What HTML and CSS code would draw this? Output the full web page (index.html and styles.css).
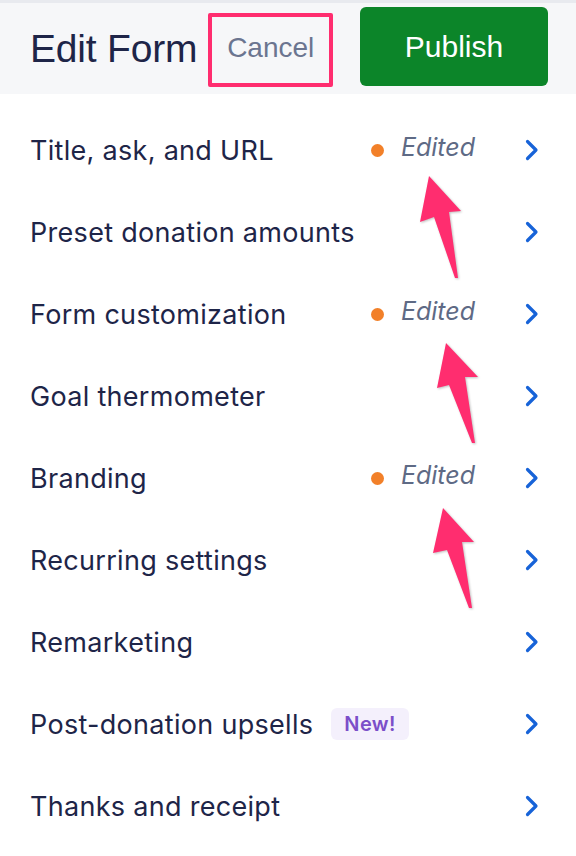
FILE: index.html
```html
<!DOCTYPE html>
<html>
<head>
<meta charset="utf-8">
<link rel="stylesheet" href="styles.css">
</head>
<body>
<div class="page">
  <header class="header">
    <h1 class="title">Edit Form</h1>
    <button class="cancel">Cancel</button>
    <button class="publish">Publish</button>
  </header>
  <ul class="list">
    <li class="row"><span class="label">Title, ask, and URL</span><span class="spacer"></span><span class="status"><span class="dot"></span><span class="edited">Edited</span></span><svg class="chev" viewBox="0 0 14 22"><path d="M2.5 2.5 L11 11 L2.5 19.5"/></svg></li>
    <li class="row"><span class="label">Preset donation amounts</span><span class="spacer"></span><svg class="chev" viewBox="0 0 14 22"><path d="M2.5 2.5 L11 11 L2.5 19.5"/></svg></li>
    <li class="row"><span class="label">Form customization</span><span class="spacer"></span><span class="status"><span class="dot"></span><span class="edited">Edited</span></span><svg class="chev" viewBox="0 0 14 22"><path d="M2.5 2.5 L11 11 L2.5 19.5"/></svg></li>
    <li class="row"><span class="label">Goal thermometer</span><span class="spacer"></span><svg class="chev" viewBox="0 0 14 22"><path d="M2.5 2.5 L11 11 L2.5 19.5"/></svg></li>
    <li class="row"><span class="label">Branding</span><span class="spacer"></span><span class="status"><span class="dot"></span><span class="edited">Edited</span></span><svg class="chev" viewBox="0 0 14 22"><path d="M2.5 2.5 L11 11 L2.5 19.5"/></svg></li>
    <li class="row"><span class="label">Recurring settings</span><span class="spacer"></span><svg class="chev" viewBox="0 0 14 22"><path d="M2.5 2.5 L11 11 L2.5 19.5"/></svg></li>
    <li class="row"><span class="label">Remarketing</span><span class="spacer"></span><svg class="chev" viewBox="0 0 14 22"><path d="M2.5 2.5 L11 11 L2.5 19.5"/></svg></li>
    <li class="row"><span class="label">Post-donation upsells</span><span class="badge">New!</span><span class="spacer"></span><svg class="chev" viewBox="0 0 14 22"><path d="M2.5 2.5 L11 11 L2.5 19.5"/></svg></li>
    <li class="row"><span class="label">Thanks and receipt</span><span class="spacer"></span><svg class="chev" viewBox="0 0 14 22"><path d="M2.5 2.5 L11 11 L2.5 19.5"/></svg></li>
  </ul>
  <svg class="arrows" viewBox="0 0 576 856" width="576" height="856">
    <polygon points="429,176 461,211 449,212 458,278 455,278 434,217 420,222"/>
    <polygon points="446,343 478,377 465,377 475,443 472,443 449,385 437,388"/>
    <polygon points="443,508 474,542 462,542 472,608 469,608 447,550 433,553"/>
  </svg>
</div>
</body>
</html>
```

FILE: styles.css
```css
* { box-sizing: border-box; }
html, body { margin: 0; padding: 0; background: #ffffff; }
.page {
  position: relative;
  width: 576px;
  height: 856px;
  overflow: hidden;
  font-family: "Inter", "Liberation Sans", sans-serif;
}
.header {
  display: flex;
  align-items: center;
  height: 94px;
  padding: 0 28px 0 30px;
  background: #f6f7f9;
  border-top: 3px solid #e8eaef;
}
.title {
  margin: 0;
  font-family: "Liberation Sans", Arial, sans-serif;
  font-weight: 400;
  font-size: 39px;
  color: #1e2548;
  letter-spacing: -0.2px;
}
.cancel {
  margin-left: 11px;
  width: 125px;
  height: 74px;
  margin-top: 2px;
  border: 4px solid #ff2d6f;
  border-radius: 2px;
  background: transparent;
  font-family: "Liberation Sans", Arial, sans-serif;
  font-size: 28px;
  color: #6b7590;
  padding: 0 0 4px 0;
}
.publish {
  margin-left: auto;
  width: 188px;
  height: 79px;
  margin-top: -4px;
  border: none;
  border-radius: 6px;
  background: #0c8529;
  color: #ffffff;
  font-family: "Liberation Sans", Arial, sans-serif;
  font-size: 30px;
  padding: 0;
}
.list {
  list-style: none;
  margin: 0;
  padding: 15px 0 0 0;
}
.row {
  display: flex;
  align-items: center;
  height: 82px;
  padding: 0 37px 0 30px;
}
.label {
  font-size: 27px;
  letter-spacing: 0.3px;
  color: #1e2548;
  white-space: nowrap;
}
.spacer { flex: 1; }
.badge {
  margin-left: 18px;
  padding: 0 13px;
  height: 32px;
  line-height: 32px;
  border-radius: 6px;
  background: #f4f0fc;
  color: #7b4fc9;
  font-size: 20px;
  font-weight: 600;
  letter-spacing: 0.4px;
}
.status {
  display: flex;
  align-items: center;
  margin-top: -6px;
}
.dot {
  width: 13px;
  height: 13px;
  border-radius: 50%;
  background: #f28029;
  margin-top: 6px;
}
.edited {
  margin-left: 17px;
  font-size: 25px;
  font-style: italic;
  color: #5e6a85;
}
.chev {
  width: 14px;
  height: 22px;
  margin-left: 50px;
  fill: none;
  stroke: #1763d8;
  stroke-width: 3.2;
  stroke-linecap: round;
  stroke-linejoin: round;
}
.arrows {
  position: absolute;
  left: 0;
  top: 0;
  pointer-events: none;
  fill: #ff2d6f;
  filter: drop-shadow(1px 1px 1px rgba(0,0,0,0.25));
}
```
